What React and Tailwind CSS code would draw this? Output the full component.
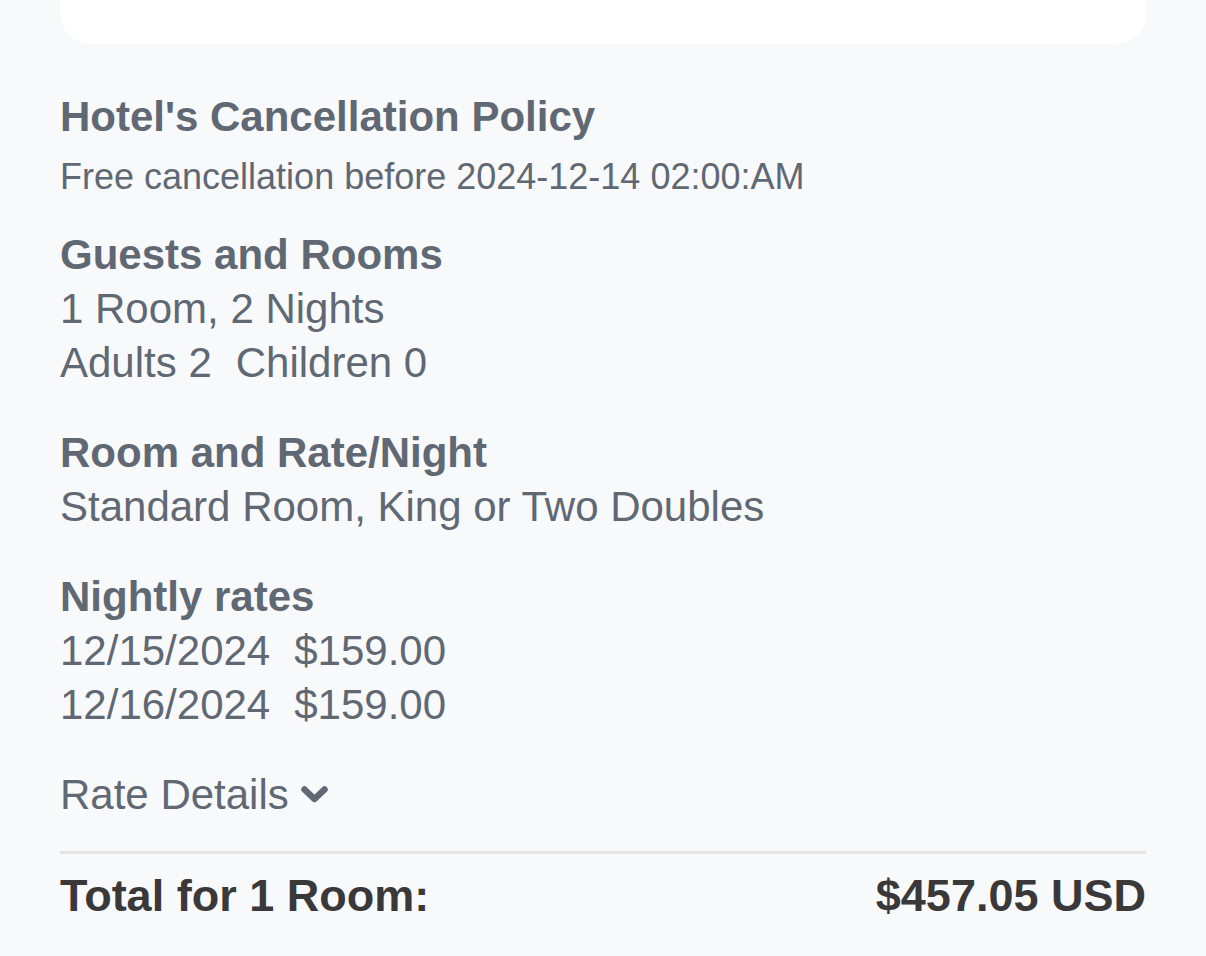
import React from "react";

const rates = [
    { date: "12/15/2024", price: "$159.00" },
    { date: "12/16/2024", price: "$159.00" },
];

const ChevronDown = () => (
    <svg width="27" height="17" viewBox="0 0 27 17" className="ml-[12px] -mt-[2px]">
        <polyline
            points="3.5,3.5 13.5,13 23.5,3.5"
            fill="none"
            stroke="currentColor"
            strokeWidth="6.5"
            strokeLinecap="round"
            strokeLinejoin="round"
        />
    </svg>
);

const App = () => {
    return (
        <div
            className="min-h-[956px] w-full bg-[#f8f9fb] px-[60px] text-[#5f6873]"
            style={{ fontFamily: '"Liberation Sans", Arial, sans-serif' }}
        >
            {/* bottom of the card above */}
            <div className="h-[44px] w-full rounded-b-[30px] bg-white" />

            <section className="mt-[46px]">
                <h2 className="text-[42px] leading-[54px] font-bold">Hotel's Cancellation Policy</h2>
                <p className="mt-[6px] text-[36px] leading-[54px]">
                    Free cancellation before 2024-12-14 02:00:AM
                </p>
            </section>

            <section className="mt-[24px]">
                <h2 className="text-[42px] leading-[54px] font-bold">Guests and Rooms</h2>
                <p className="text-[42px] leading-[54px]">1 Room, 2 Nights</p>
                <div className="flex gap-[24px] text-[42px] leading-[54px]">
                    <span>Adults 2</span>
                    <span>Children 0</span>
                </div>
            </section>

            <section className="mt-[36px]">
                <h2 className="text-[42px] leading-[54px] font-bold">Room and Rate/Night</h2>
                <p className="text-[42px] leading-[54px]">Standard Room, King or Two Doubles</p>
            </section>

            <section className="mt-[36px]">
                <h2 className="text-[42px] leading-[54px] font-bold">Nightly rates</h2>
                {rates.map((rate) => (
                    <div key={rate.date} className="flex gap-[24px] text-[42px] leading-[54px]">
                        <span>{rate.date}</span>
                        <span>{rate.price}</span>
                    </div>
                ))}
            </section>

            <button className="mt-[36px] flex items-center text-[42px] leading-[54px] text-[#5f6873]">
                Rate Details
                <ChevronDown />
            </button>

            <div className="mt-[29px] border-t-[3px] border-[#e8e3e3]" />

            <div className="mt-[15px] flex justify-between text-[45px] leading-[54px] font-bold text-[#3a3839]">
                <span>Total for 1 Room:</span>
                <span>$457.05 USD</span>
            </div>
        </div>
    );
};

export default App;
